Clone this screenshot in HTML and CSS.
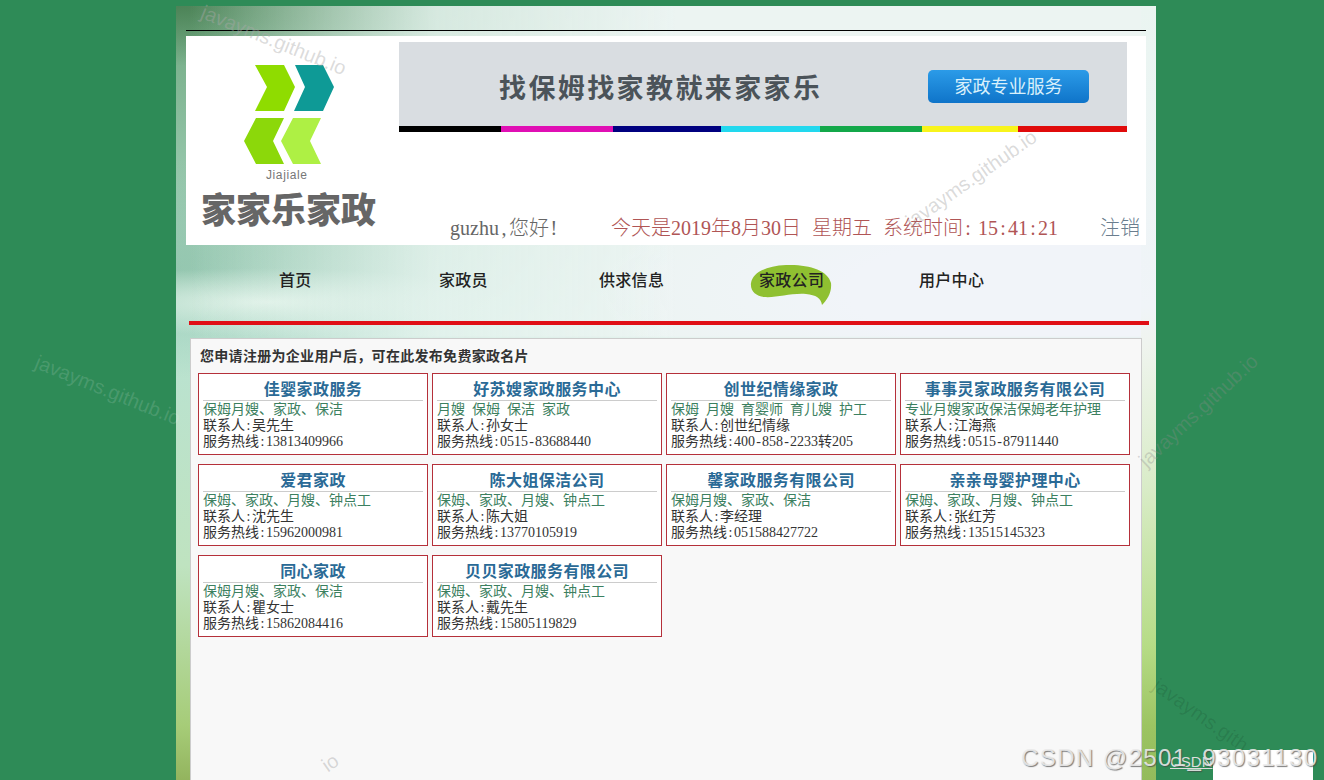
FILE: index.html
```html
<!DOCTYPE html>
<html lang="zh-CN">
<head>
    <meta charset="UTF-8">
    <title>家家乐家政</title>
    <link rel="stylesheet" href="styles.css">
</head>
<body>

    <div class="page">
        <div class="top-line"></div>

        <!-- Logo, banner, login row -->
        <div class="header">
            <div class="logo">
                <svg class="logo-mark" width="100" height="110" viewBox="240 60 100 110">
                    <polygon fill="#8fdc00" points="255,65 284,65 295,87 284,111 255,111 267,87"/>
                    <polygon fill="#0e9a96" points="295,65 323,65 334,87 323,111 294,111 305,87"/>
                    <polygon fill="#8cd80a" points="244,141 256,118 284,118 273,141 284,164 256,164"/>
                    <polygon fill="#aef044" points="281,141 293,118 321,118 310,141 321,164 293,164"/>
                </svg>
                <div class="logo-en">Jiajiale</div>
                <div class="logo-cn">家家乐家政</div>
            </div>
            <div class="header-right">
                <div class="banner">
                    <div class="banner-main">
                        <span class="banner-text">找保姆找家教就来家家乐</span>
                        <span class="banner-btn">家政专业服务</span>
                    </div>
                    <div class="color-bar">
                        <span class="c-black"></span>
                        <span class="c-magenta"></span>
                        <span class="c-navy"></span>
                        <span class="c-cyan"></span>
                        <span class="c-green"></span>
                        <span class="c-yellow"></span>
                        <span class="c-red"></span>
                    </div>
                </div>
                <div class="info-row">
                    <span class="user">guzhu<span class="sep">,</span>您好<span class="sep">!</span></span>
                    <span class="date">
                        <span>今天是2019年8月30日</span>
                        <span>星期五</span>
                        <span>系统时间<span class="sep">:</span> 15<span class="sep">:</span>41<span class="sep">:</span>21</span>
                    </span>
                    <span class="logout">注销</span>
                </div>
            </div>
        </div>

        <!-- Navigation -->
        <div class="nav">
            <a class="nav-item">首页</a>
            <a class="nav-item">家政员</a>
            <a class="nav-item">供求信息</a>
            <a class="nav-item active">
                <svg class="leaf" width="82" height="42" viewBox="0 0 82 42">
                    <path fill="#8fc031" d="M1 19C3 8 16 2 36 1C58 0 78 6 81 19C82 29 77 36 72 41C71 34 66 31 56 30C40 29 27 34 14 33C6 32 0 27 1 19Z"/>
                </svg>
                <span>家政公司</span>
            </a>
            <a class="nav-item">用户中心</a>
        </div>
        <div class="red-line"></div>

        <!-- Company cards -->
        <div class="panel">
            <div class="panel-title">您申请注册为企业用户后，可在此发布免费家政名片</div>
            <div class="card-grid">
                <div class="card">
                    <div class="card-title">佳婴家政服务</div>
                    <div class="card-tags">保姆月嫂、家政、保洁</div>
                    <div class="card-line">联系人<span class="sep">:</span>吴先生</div>
                    <div class="card-line">服务热线<span class="sep">:</span>13813409966</div>
                </div>
                <div class="card">
                    <div class="card-title">好苏嫂家政服务中心</div>
                    <div class="card-tags">月嫂 &nbsp;保姆 &nbsp;保洁 &nbsp;家政</div>
                    <div class="card-line">联系人<span class="sep">:</span>孙女士</div>
                    <div class="card-line">服务热线<span class="sep">:</span>0515<span class="sep">-</span>83688440</div>
                </div>
                <div class="card">
                    <div class="card-title">创世纪情缘家政</div>
                    <div class="card-tags">保姆 &nbsp;月嫂 &nbsp;育婴师 &nbsp;育儿嫂 &nbsp;护工</div>
                    <div class="card-line">联系人<span class="sep">:</span>创世纪情缘</div>
                    <div class="card-line">服务热线<span class="sep">:</span>400<span class="sep">-</span>858<span class="sep">-</span>2233转205</div>
                </div>
                <div class="card">
                    <div class="card-title">事事灵家政服务有限公司</div>
                    <div class="card-tags">专业月嫂家政保洁保姆老年护理</div>
                    <div class="card-line">联系人<span class="sep">:</span>江海燕</div>
                    <div class="card-line">服务热线<span class="sep">:</span>0515<span class="sep">-</span>87911440</div>
                </div>
                <div class="card">
                    <div class="card-title">爱君家政</div>
                    <div class="card-tags">保姆、家政、月嫂、钟点工</div>
                    <div class="card-line">联系人<span class="sep">:</span>沈先生</div>
                    <div class="card-line">服务热线<span class="sep">:</span>15962000981</div>
                </div>
                <div class="card">
                    <div class="card-title">陈大姐保洁公司</div>
                    <div class="card-tags">保姆、家政、月嫂、钟点工</div>
                    <div class="card-line">联系人<span class="sep">:</span>陈大姐</div>
                    <div class="card-line">服务热线<span class="sep">:</span>13770105919</div>
                </div>
                <div class="card">
                    <div class="card-title">馨家政服务有限公司</div>
                    <div class="card-tags">保姆月嫂、家政、保洁</div>
                    <div class="card-line">联系人<span class="sep">:</span>李经理</div>
                    <div class="card-line">服务热线<span class="sep">:</span>051588427722</div>
                </div>
                <div class="card">
                    <div class="card-title">亲亲母婴护理中心</div>
                    <div class="card-tags">保姆、家政、月嫂、钟点工</div>
                    <div class="card-line">联系人<span class="sep">:</span>张红芳</div>
                    <div class="card-line">服务热线<span class="sep">:</span>13515145323</div>
                </div>
                <div class="card">
                    <div class="card-title">同心家政</div>
                    <div class="card-tags">保姆月嫂、家政、保洁</div>
                    <div class="card-line">联系人<span class="sep">:</span>瞿女士</div>
                    <div class="card-line">服务热线<span class="sep">:</span>15862084416</div>
                </div>
                <div class="card">
                    <div class="card-title">贝贝家政服务有限公司</div>
                    <div class="card-tags">保姆、家政、月嫂、钟点工</div>
                    <div class="card-line">联系人<span class="sep">:</span>戴先生</div>
                    <div class="card-line">服务热线<span class="sep">:</span>15805119829</div>
                </div>
            </div>
        </div>
    </div>

    <!-- Watermarks lying over the page -->
    <div class="wm wm-1">javayms.github.io</div>
    <div class="wm wm-2">javayms.github.io</div>
    <div class="wm wm-3">javayms.github.io</div>
    <div class="wm wm-4">javayms.github.io</div>
    <div class="wm wm-5">javayms.gith</div>
    <div class="wm wm-6">io</div>

    <div class="corner-box"></div>
    <div class="csdn-small">CSDN</div>
    <div class="csdn-mark">CSDN @2501_93031130</div>

</body>
</html>
```
FILE: styles.css
```css
html, body {
    margin: 0;
    height: 100%;
    overflow: hidden;
    background: #2e8b57;
    font-family: "Liberation Serif", "Noto Sans CJK SC", serif;
    color: #333;
}

.page {
    box-sizing: border-box;
    width: 980px;
    height: 774px;
    margin: 6px 0 0 176px;
    overflow: hidden;
    background:
        radial-gradient(ellipse 260px 60px at 0 0, rgba(70, 125, 80, 0.85), rgba(70, 125, 80, 0) 100%),
        radial-gradient(ellipse 240px 34px at 90px 296px, rgba(238, 250, 242, 0.8), rgba(238, 250, 242, 0) 100%),
        radial-gradient(ellipse 330px 110px at 0 262px, rgba(130, 185, 160, 0.55), rgba(130, 185, 160, 0) 100%),
        linear-gradient(to bottom, #6fa880 0, #b9e2d2 320px, #bfe3c0 560px, #a6cc78 720px, #93b45e 774px);
    position: relative;
}

/* light wash over the top part, bluer towards the right of the nav */
.page::before {
    content: "";
    position: absolute;
    left: 0;
    top: 0;
    width: 100%;
    height: 100%;
    background:
        radial-gradient(ellipse 560px 130px at 100% 285px, rgba(241, 244, 249, 1) 55%, rgba(241, 244, 249, 0) 100%),
        linear-gradient(to right, rgba(232, 244, 240, 0) 0, rgba(232, 244, 240, 0) 12px, rgba(232, 244, 240, 0.85) 260px, rgba(236, 244, 242, 1) 500px);
    -webkit-mask-image: linear-gradient(to bottom, #000 0, #000 330px, transparent 340px);
    mask-image: linear-gradient(to bottom, #000 0, #000 330px, transparent 340px);
}

/* right hand strip */
.page::after {
    content: "";
    position: absolute;
    right: 0;
    top: 0;
    width: 15px;
    height: 100%;
    background: linear-gradient(to bottom, #eaf5f1 0, #f0f4f8 300px, #eff4ee 340px, #d9ecc8 480px, #b6dc86 640px, #9cc462 720px, #93bb5c 774px);
}

.top-line {
    position: relative;
    z-index: 1;
    height: 1px;
    margin: 24px 10px 5px;
    background: #000;
}

.header {
    position: relative;
    z-index: 1;
    display: flex;
    height: 209px;
    margin: 0 10px;
    background: #fff;
}

.logo {
    width: 213px;
    flex-shrink: 0;
    padding-top: 24px;
    box-sizing: border-box;
}

.logo-mark {
    display: block;
    margin-left: 54px;
}

.logo-en {
    margin: -1px 0 0 80px;
    font-family: "Liberation Sans", sans-serif;
    font-size: 12px;
    line-height: 13px;
    letter-spacing: 0.6px;
    color: #777;
}

.logo-cn {
    margin: 5px 0 0 15px;
    font-family: "Noto Sans CJK SC", sans-serif;
    font-size: 35px;
    line-height: 42px;
    font-weight: 900;
    color: #666;
    white-space: nowrap;
}

.header-right {
    flex: 1;
    display: flex;
    flex-direction: column;
    justify-content: space-between;
    padding-top: 6px;
    min-width: 0;
}

.banner {
    width: 728px;
    background: #d9dde1;
}

.banner-main {
    display: flex;
    align-items: center;
    box-sizing: border-box;
    height: 84px;
    padding: 4px 0 0 100px;
}

.banner-text {
    width: 429px;
    font-family: "Noto Sans CJK SC", sans-serif;
    font-size: 27px;
    font-weight: 700;
    letter-spacing: 2.4px;
    color: #4b5359;
    white-space: nowrap;
}

.banner-btn {
    width: 161px;
    height: 33px;
    border-radius: 5px;
    background: linear-gradient(to bottom, #2b9be8, #0f74c9);
    font-family: "Noto Sans CJK SC", sans-serif;
    font-size: 18px;
    line-height: 30px;
    text-align: center;
    color: #d9f0fb;
}

.color-bar {
    display: flex;
    height: 6px;
}

.c-black { width: 102px; background: #000; }
.c-magenta { width: 112px; background: #e00fb4; }
.c-navy { width: 108px; background: #00007f; }
.c-cyan { width: 99px; background: #22d8ee; }
.c-green { width: 102px; background: #13a84a; }
.c-yellow { width: 96px; background: #f8f41c; }
.c-red { width: 109px; background: #e00b0b; }

/* half width separators, as the bitmap font of the original has them */
.sep {
    display: inline-block;
    width: 0.5em;
    text-align: center;
}

.info-row {
    display: flex;
    align-items: center;
    height: 24px;
    margin-bottom: 7px;
    padding-left: 51px;
    font-size: 20px;
    font-weight: 300;
    white-space: nowrap;
}

.user {
    width: 161px;
    color: #666;
}

.date {
    display: flex;
    gap: 11px;
    width: 489px;
    color: #b05555;
}

.logout {
    color: #6a7d8e;
}

.nav {
    position: relative;
    z-index: 1;
    display: flex;
    height: 75px;
    padding: 23px 0 0 103px;
    box-sizing: border-box;
}

.nav-item {
    position: relative;
    width: 160px;
    font-family: "Noto Sans CJK SC", sans-serif;
    font-size: 16px;
    line-height: 22px;
    font-weight: 500;
    letter-spacing: 0.3px;
    color: #222;
}

.nav-item span {
    position: relative;
}

.leaf {
    position: absolute;
    left: -9px;
    top: -4px;
}

.red-line {
    position: relative;
    z-index: 1;
    height: 4px;
    margin: 1px 7px 0 13px;
    background: #e00f16;
}

.panel {
    position: relative;
    z-index: 1;
    box-sizing: border-box;
    height: 460px;
    margin: 13px 14px 0;
    padding: 7px 7px 0;
    background: #f8f8f8;
    border: 1px solid #ccc;
    border-bottom: 0;
}

.panel-title {
    height: 27px;
    padding-left: 2px;
    font-family: "Noto Sans CJK SC", sans-serif;
    font-size: 14px;
    line-height: 18px;
    font-weight: 700;
    letter-spacing: 0.3px;
    color: #333;
    white-space: nowrap;
}

.card-grid {
    display: grid;
    grid-template-columns: repeat(4, 230px);
    grid-auto-rows: 82px;
    column-gap: 4px;
    row-gap: 9px;
}

.card {
    box-sizing: border-box;
    padding: 4px 4px 0;
    background: #fff;
    border: 1px solid #b5303a;
    font-family: "Liberation Serif", "Noto Sans CJK SC", serif;
    font-size: 14px;
    line-height: 16px;
    color: #333;
    white-space: nowrap;
}

.card-title {
    height: 22px;
    margin-bottom: 1px;
    border-bottom: 1px solid #ccc;
    font-family: "Noto Sans CJK SC", sans-serif;
    font-size: 16px;
    line-height: 21px;
    font-weight: 700;
    letter-spacing: 0.4px;
    text-align: center;
    color: #2a6a96;
}

.card-tags,
.card-line {
    height: 16px;
}

.card-tags {
    color: #3c8060;
}

/* overlays */
.wm {
    position: absolute;
    z-index: 2;
    font-family: "Liberation Sans", sans-serif;
    font-size: 20px;
    white-space: nowrap;
    color: rgba(140, 140, 140, 0.32);
    transform-origin: left center;
}

.wm-1 { left: 202px; top: 0; transform: rotate(22deg); color: rgba(170, 170, 170, 0.42); }
.wm-2 { left: 908px; top: 212px; transform: rotate(-35deg); }
.wm-3 { left: 36px; top: 350px; transform: rotate(22deg); color: rgba(255, 255, 255, 0.14); }
.wm-4 { left: 1142px; top: 452px; transform: rotate(-43deg); }
.wm-5 { left: 1155px; top: 672px; transform: rotate(35deg); color: rgba(0, 0, 0, 0.1); }
.wm-6 { left: 324px; top: 756px; transform: rotate(-35deg); }

.corner-box {
    position: absolute;
    z-index: 3;
    left: 1213px;
    top: 750px;
    width: 100px;
    height: 30px;
    background: #fff;
}

.csdn-small {
    position: absolute;
    z-index: 3;
    left: 1170px;
    top: 753px;
    font-family: "Liberation Sans", sans-serif;
    font-size: 15px;
    line-height: 18px;
    color: #ddd;
    text-decoration: underline;
}

.csdn-mark {
    position: absolute;
    z-index: 4;
    left: 1021px;
    top: 743px;
    font-family: "Liberation Sans", sans-serif;
    font-size: 24px;
    line-height: 30px;
    letter-spacing: 1.4px;
    white-space: nowrap;
    color: rgba(235, 235, 235, 0.9);
    text-shadow: 1px 1px 1px rgba(70, 70, 70, 0.7);
}
```
